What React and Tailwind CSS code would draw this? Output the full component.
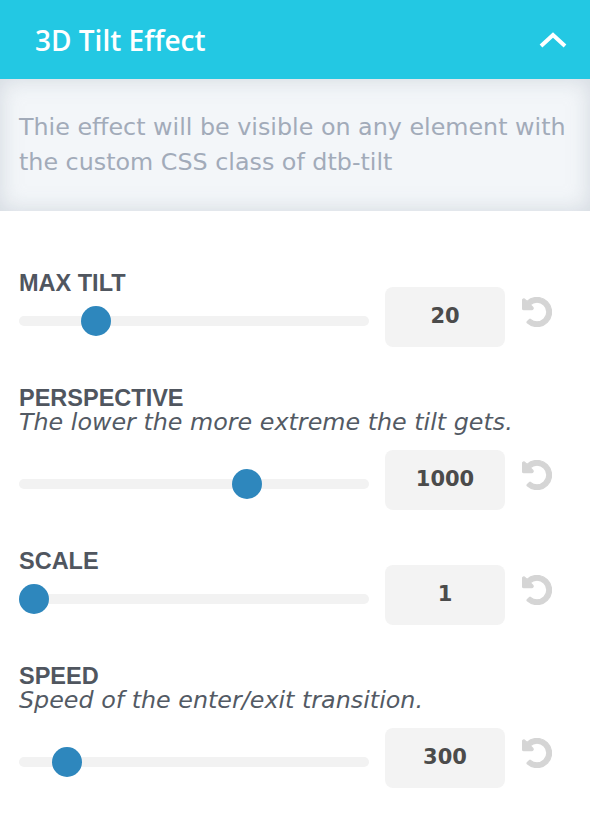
import React from 'react';
import { FaUndoAlt } from 'react-icons/fa';

const settings = [
  { label: 'MAX TILT', value: '20', pos: 19.4 },
  { label: 'PERSPECTIVE', desc: 'The lower the more extreme the tilt gets.', value: '1000', pos: 66.6 },
  { label: 'SCALE', value: '1', pos: 0 },
  { label: 'SPEED', desc: 'Speed of the enter/exit transition.', value: '300', pos: 10.3 },
];

const verdanaLike = { fontFamily: '"DejaVu Sans", Verdana, sans-serif' };
const helveticaLike = { fontFamily: '"Liberation Sans", Arial, sans-serif' };

function Slider({ pos }) {
  // thumb is 30px wide, track 350px
  return (
    <div className="relative h-[52px] flex items-center">
      <div className="w-full h-[10px] rounded-full bg-[#f2f2f2]" />
      <div
        className="absolute top-[11px] w-[30px] h-[30px] rounded-full bg-[#2e87bd]"
        style={{ left: (pos * 320) / 100 }}
      />
    </div>
  );
}

function SettingRow({ label, desc, value, pos }) {
  return (
    <div className="flex items-end">
      <div className="w-[350px] flex flex-col">
        <div className="text-[23.5px] leading-[24px] font-bold text-[#50565f]" style={helveticaLike}>
          {label}
        </div>
        {desc && (
          <div
            className="text-[23.8px] leading-[24px] italic text-[#535a64] whitespace-nowrap mb-[24px]"
            style={verdanaLike}
          >
            {desc}
          </div>
        )}
        <Slider pos={pos} />
      </div>
      <div
        className="ml-[16px] w-[120px] h-[60px] shrink-0 rounded-[8px] bg-[#f3f3f3] flex items-center justify-center text-[21px] font-bold text-[#4b4b4b]"
        style={verdanaLike}
      >
        {value}
      </div>
      <div className="ml-[17px] h-[60px] pb-[10px] flex items-center text-[#d5d5d5]">
        <FaUndoAlt size={30} stroke="currentColor" strokeWidth={22} />
      </div>
    </div>
  );
}

export default function App() {
  return (
    <div className="w-[590px] h-[820px] bg-white overflow-hidden" style={{ fontFamily: '"Open Sans", sans-serif' }}>
      <div className="h-[79px] bg-[#23c8e3] flex items-center justify-between pl-[35px] pr-[23px]">
        <h2 className="text-[28px] font-semibold text-white">3D Tilt Effect</h2>
        <svg width="28" height="16" viewBox="0 0 28 16" fill="none">
          <polyline points="2,14 14,3 26,14" stroke="white" strokeWidth="4" />
        </svg>
      </div>
      <div className="h-[132px] bg-[#f3f6f9] shadow-[inset_0_0_22px_rgba(150,160,175,0.35)] flex items-center pl-[19px] pr-[8px]">
        <p className="text-[23.8px] leading-[35px] text-[#a2abb9]" style={verdanaLike}>
          Thie effect will be visible on any element with the custom CSS class of dtb-tilt
        </p>
      </div>
      <div className="flex flex-col gap-[39px] pt-[60px] px-[19px]">
        {settings.map((s) => (
          <SettingRow key={s.label} {...s} />
        ))}
      </div>
    </div>
  );
}
